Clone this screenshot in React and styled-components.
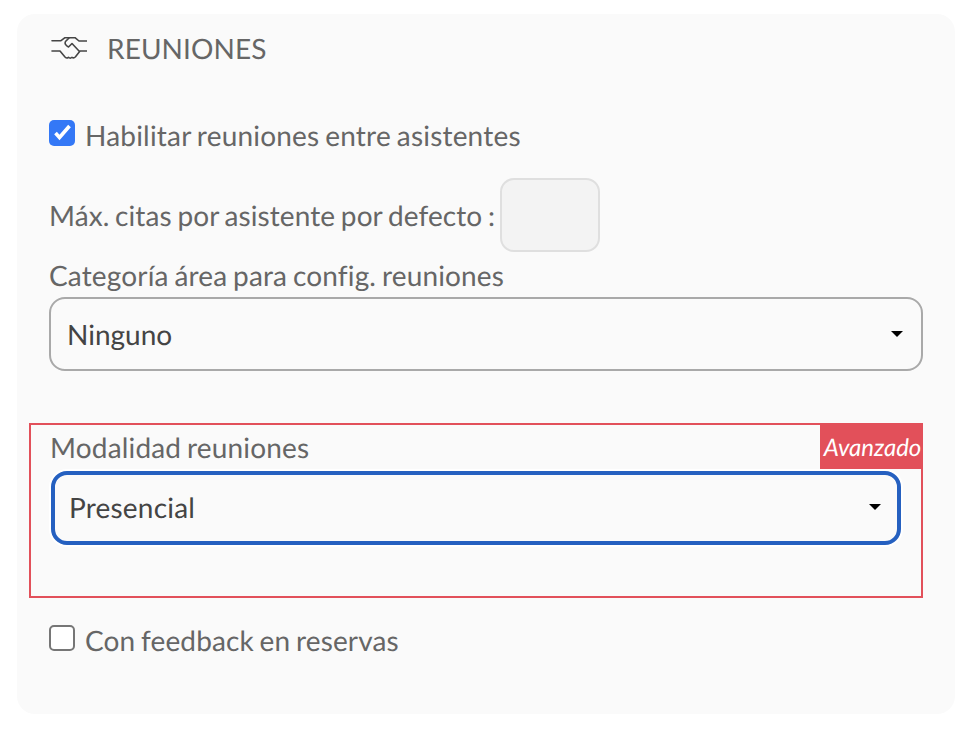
import React from "react";
import styled, { createGlobalStyle } from "styled-components";

const Global = createGlobalStyle`
  html, body { margin: 0; padding: 0; background: #fff; }
  body { font-family: Lato, "Liberation Sans", sans-serif; text-rendering: geometricPrecision; }
`;
const Page = styled.div`
  width: 968px; height: 732px; box-sizing: border-box; padding: 14px 13px 18px 17px;
`;
const Panel = styled.section`
  box-sizing: border-box; height: 700px; background: #fafafa; border-radius: 18px;
  padding: 0 32px 0 32px; color: #666; font-size: 28px; line-height: 32px;
  letter-spacing: 0.2px; word-spacing: -1.5px;
`;
const Heading = styled.h2`
  margin: 0; height: 70px; display: flex; align-items: center; gap: 20px; padding-left: 2px;
  font-weight: 400; font-size: 28px; color: #666; letter-spacing: 0.1px;
`;
const HeadingText = styled.span`
  margin-top: -2px;
`;
const CheckRow = styled.label`
  display: flex; align-items: flex-start; gap: 10px; height: 32px;
  margin-top: ${p => p.$top}px; letter-spacing: ${p => p.$spacing || "0.2px"};
`;
const Box = styled.span`
  box-sizing: border-box; width: 26px; height: 26px; border-radius: 5px; flex: none; margin-top: 1px;
  display: flex; align-items: center; justify-content: center;
  background: ${p => (p.$on ? "#3478f6" : "#fff")};
  border: ${p => (p.$on ? "none" : "2px solid #767676")};
`;
const InlineField = styled.div`
  display: flex; align-items: center; gap: 5px; margin-top: 27px; padding-bottom: 5px;
  letter-spacing: 0.08px;
`;
const NumberBox = styled.div`
  box-sizing: border-box; width: 100px; height: 74px; background: #f3f3f3;
  border: 2px solid #dfdfdf; border-radius: 14px;
`;
const Label = styled.div`
  height: 40px; line-height: 36px; letter-spacing: 0.15px;
`;
const FramedLabel = styled.div`
  height: 44px; line-height: 40px; margin-left: -1px; letter-spacing: 0.17px;
`;
const Select = styled.div`
  box-sizing: border-box; height: 74px; background: #fafafa; display: flex; align-items: center;
  justify-content: space-between; color: #444; padding: 0 18px 0 16px; letter-spacing: 0;
  border-radius: 16px; border: 2px solid #a9a9a9;
`;
const FocusedSelect = styled(Select)`
  border: 4px solid #2560c0; box-shadow: 0 0 0 2px #fff; letter-spacing: 0.2px;
  padding: 0 16px 2px 14px;
`;
const Advanced = styled.div`
  position: relative; box-sizing: border-box; height: 175px; margin: 52px 0 0 -20px;
  border: 2px solid #e2505a; padding: 2px 20px 0 20px;
`;
const Badge = styled.div`
  position: absolute; top: -2px; right: -2px; width: 103px; height: 46px; background: #e2505a;
  color: #fff; font-style: italic; font-size: 24px; line-height: 50px; text-align: center;
  text-indent: 2px; letter-spacing: 0;
`;
const Caret = () => (
  <svg width="12" height="6" viewBox="0 0 12 6"><path d="M0 0h12L6 6z" fill="#000" /></svg>
);
const Check = () => (
  <svg width="26" height="26" viewBox="0 0 26 26"><path d="M6.500 13l4 4.500L20.500 6" fill="none" stroke="#fff" strokeWidth="3.6" /></svg>
);
const Handshake = () => (
  <svg width="36" height="24" viewBox="0 0 36 24" fill="none" stroke="#454545" strokeWidth="1.6" strokeLinejoin="round" strokeLinecap="round">
    <path d="M1 3.700h9l4-3h10l4 3.300h8" />
    <path d="M1 14h8l5 6c1 1 2.500 1.200 3.500.3 1 1 2.500 1 3.500 0 1 .8 2.500.5 3.500-.6L29 14h7" />
    <path d="M18 1l-3.500 3.500c-1 2 0 4 3 5.500L21 6.500 28 14" />
  </svg>
);

export default function App() {
  return (
    <Page>
      <Global />
      <Panel>
        <Heading><Handshake /><HeadingText>REUNIONES</HeadingText></Heading>
        <CheckRow $top={35}><Box $on><Check /></Box>Habilitar reuniones entre asistentes</CheckRow>
        <InlineField>Máx. citas por asistente por defecto :<NumberBox /></InlineField>
        <Label>Categoría área para config. reuniones</Label>
        <Select>Ninguno<Caret /></Select>
        <Advanced>
          <Badge>Avanzado</Badge>
          <FramedLabel>Modalidad reuniones</FramedLabel>
          <FocusedSelect>Presencial<Caret /></FocusedSelect>
        </Advanced>
        <CheckRow $top={26} $spacing="0.12px"><Box />Con feedback en reservas</CheckRow>
      </Panel>
    </Page>
  );
}
